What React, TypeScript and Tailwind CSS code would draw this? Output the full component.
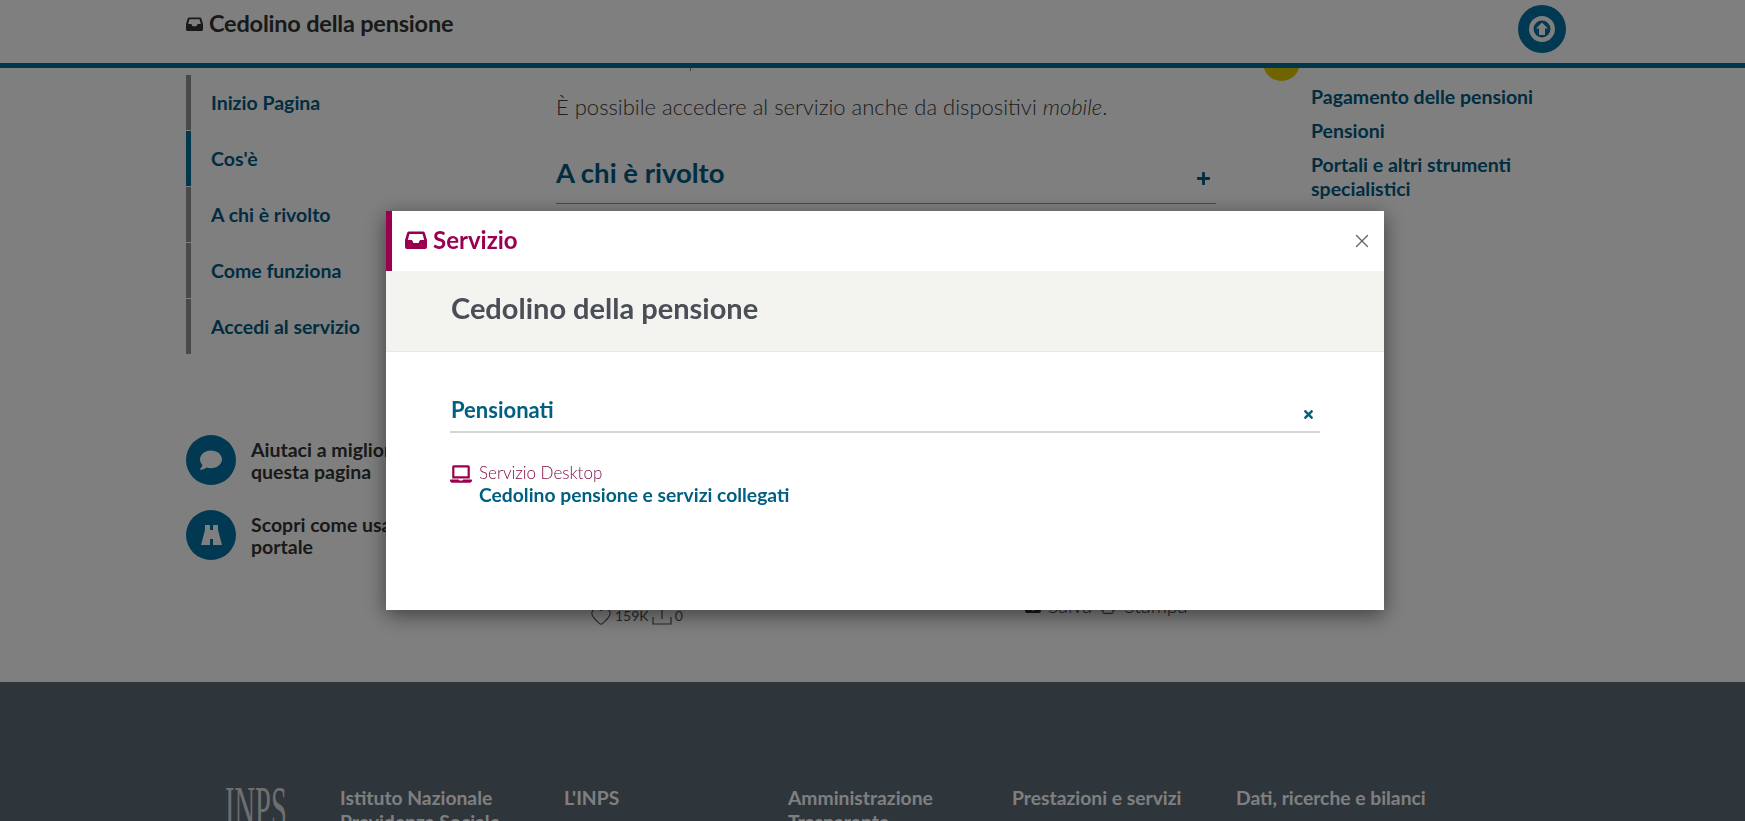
import { FaComment, FaLaptop, FaPlus, FaSave, FaTimes } from "react-icons/fa";
import { Heart, Printer, X } from "lucide-react";

const font = "font-['Lato','Liberation_Sans',sans-serif]";

const navItems = ["Inizio Pagina", "Cos'è", "A chi è rivolto", "Come funziona", "Accedi al servizio"];
const footerCols = ["Istituto Nazionale Previdenza Sociale", "L'INPS", "Amministrazione Trasparente", "Prestazioni e servizi", "Dati, ricerche e bilanci"];

// fa-inbox, taller than the one in react-icons
const InboxIcon = ({ className }: { className: string }) => (
    <svg viewBox="0 0 22 18" fill="currentColor" className={className}>
        <path fillRule="evenodd" d="M4 .5h14a2 2 0 0 1 1.8 1.2L22 9v7a2 2 0 0 1-2 2H2a2 2 0 0 1-2-2V9L2.200 1.700A2 2 0 0 1 4 .5zM4.500 3 2.800 9H7l1.500 3h5l1.500-3h4.200L17.500 3z" />
    </svg>
);

const BinocularsIcon = ({ className }: { className: string }) => (
    <svg viewBox="0 0 21 20" fill="currentColor" className={className}>
        <path d="M4 0h5v5h3V0h5v5l4 15h-9v-6H9v6H0L4 5z" />
    </svg>
);

const ArrowRingIcon = ({ className }: { className: string }) => (
    <svg viewBox="0 0 26 26" className={className}>
        <circle cx="13" cy="13" r="10.700" fill="none" stroke="currentColor" strokeWidth="4.500" />
        <path fill="currentColor" d="M13 6.500l6 6h-3V19h-6v-6.500H7z" />
    </svg>
);

const ShareIcon = ({ className }: { className: string }) => (
    <svg viewBox="0 0 20 20" fill="none" stroke="currentColor" strokeWidth="1.200" className={className}>
        <path d="M1 12v7h18v-7M10 1v13M6.500 4 10 1l3.500 3" />
    </svg>
);

const App = () => {
    return (
        <div className={`${font} relative h-[821px] w-full overflow-hidden bg-white`}>
            <div className="relative z-10 flex h-[68px] items-start justify-between border-b-[5px] border-[#006e96] bg-white pl-[186px] pr-[179px]">
                <div className="flex h-[48px] items-center gap-[6px] text-[#333]">
                    <InboxIcon className="h-[14px] w-[17px]" />
                    <span className="text-[23.500px] font-bold tracking-[-0.2px]">Cedolino della pensione</span>
                </div>
                <div className="mt-[5px] flex h-[48px] w-[48px] items-center justify-center rounded-full bg-[#0072a2] text-[#fff]">
                    <ArrowRingIcon className="h-[26px] w-[26px]" />
                </div>
            </div>

            <div className="flex h-[614px] overflow-hidden pl-[186px]">
                <div className="w-[370px] pt-[7px]">
                    {navItems.map((item, i) => (
                        <div key={item} className={`mb-[1px] flex h-[55px] items-center border-l-[5px] pl-[20px] pt-[1px] text-[19.500px] font-bold text-[#025a82] ${i === 1 ? "border-[#006e96]" : "border-[#939393]"}`}>
                            {item}
                        </div>
                    ))}
                    <div className="mt-[81px] flex h-[50px] gap-[15px]">
                        <div className="flex h-[50px] w-[50px] items-center justify-center rounded-full bg-[#0072a2] text-white">
                            <FaComment className="h-[22px] w-[22px]" />
                        </div>
                        <div className="pt-[4px] text-[19.500px] font-bold leading-[22px] text-[#333]">Aiutaci a migliorare<br />questa pagina</div>
                    </div>
                    <div className="mt-[25px] flex h-[50px] gap-[15px]">
                        <div className="flex h-[50px] w-[50px] items-center justify-center rounded-full bg-[#0072a2] text-white">
                            <BinocularsIcon className="h-[20px] w-[21px]" />
                        </div>
                        <div className="pt-[4px] text-[19.500px] font-bold leading-[22px] text-[#333]">Scopri come usare il<br />portale</div>
                    </div>
                </div>

                <div className="flex w-[660px] flex-col">
                    <div className="ml-[134px] h-[3px] w-[1px] bg-[#888]" />
                    <p className="mt-[20px] text-[22px] font-light leading-[32px] text-[#3a3a3a]">
                        È possibile accedere al servizio anche da dispositivi <em>mobile</em>.
                    </p>
                    <div className="mt-[32px] flex h-[49px] items-start justify-between border-b border-[#999]">
                        <span className="text-[27.500px] font-bold leading-[36px] text-[#025a82]">A chi è rivolto</span>
                        <FaPlus className="mr-[5px] mt-[16px] h-[15px] w-[15px] text-[#025a82]" />
                    </div>
                    <div className="ml-[34px] mt-[401px] flex items-start gap-[3px] text-[14px] leading-[22px] text-[#555]">
                        <Heart className="h-[22px] w-[22px]" strokeWidth={1.2} />
                        <span>159K</span>
                        <ShareIcon className="h-[20px] w-[20px]" />
                        <span>0</span>
                        <div className="-mt-[14px] ml-[338px] flex items-center gap-[6px] text-[20px] font-light leading-[28px] text-[#333]">
                            <FaSave className="h-[18px] w-[18px]" />
                            <span>Salva</span>
                            <Printer className="h-[20px] w-[20px]" strokeWidth={1.2} />
                            <span>Stampa</span>
                        </div>
                    </div>
                </div>

                <div className="w-[95px]">
                    <div className="-mt-[24px] ml-[47px] h-[37px] w-[37px] rounded-full bg-[#e0c900]" />
                </div>

                <div className="w-[240px] pt-[17px] text-[19.500px] font-bold leading-[24px] text-[#025a82]">
                    <div className="mb-[10px]">Pagamento delle pensioni</div>
                    <div className="mb-[10px]">Pensioni</div>
                    <div>Portali e altri strumenti specialistici</div>
                </div>
            </div>

            <div className="flex h-[139px] overflow-hidden bg-[#5c6a76] pl-[225px] pt-[104px] text-white">
                <div className="-mt-[10px] w-[115px] origin-left scale-x-[0.46] font-['Liberation_Serif',serif] text-[62px] leading-[62px] text-[#ddd]">INPS</div>
                {footerCols.map((label) => (
                    <div key={label} className="mr-[24px] w-[200px] text-[19.300px] font-bold leading-[24px]">{label}</div>
                ))}
            </div>

            <div className="fixed inset-0 z-20 bg-black/50 pl-[386px] pt-[211px]">
                <div className="h-[399px] w-[998px] bg-white shadow-[0_5px_20px_rgba(0,0,0,0.5)]">
                    <div className="flex h-[60px] items-center justify-between border-l-[6px] border-[#99004f] pl-[13px] pr-[11px]">
                        <div className="-mt-[2px] flex items-center gap-[6px] text-[#99004f]">
                            <InboxIcon className="h-[18px] w-[22px]" />
                            <span className="text-[24px] font-bold">Servizio</span>
                        </div>
                        <X className="h-[22px] w-[22px] text-[#666]" strokeWidth={1.5} />
                    </div>
                    <div className="flex h-[81px] items-center border-b border-[#e8e8e8] bg-[#f3f3f0] pb-[6px] pl-[65px] text-[29px] font-bold text-[#4a4f57]">
                        Cedolino della pensione
                    </div>
                    <div className="px-[64px] pt-[42px]">
                        <div className="flex h-[39px] items-start justify-between border-b-2 border-[#d6d6d6]">
                            <span className="-mt-[1px] ml-[1px] text-[22px] font-bold leading-[34px] text-[#005f82]">Pensionati</span>
                            <FaTimes className="mr-[5px] mt-[14px] h-[13px] w-[13px] text-[#005f82]" />
                        </div>
                        <div className="mt-[29px] flex gap-[7px]">
                            <FaLaptop className="mt-[1px] h-[22px] w-[22px] text-[#99004f]" />
                            <div>
                                <div className="text-[17px] font-light leading-[22px] text-[#7d0a45]">Servizio Desktop</div>
                                <div className="-mt-[1px] text-[19.300px] font-bold leading-[24px] text-[#005f82]">Cedolino pensione e servizi collegati</div>
                            </div>
                        </div>
                    </div>
                </div>
            </div>
        </div>
    );
}

export default App;
